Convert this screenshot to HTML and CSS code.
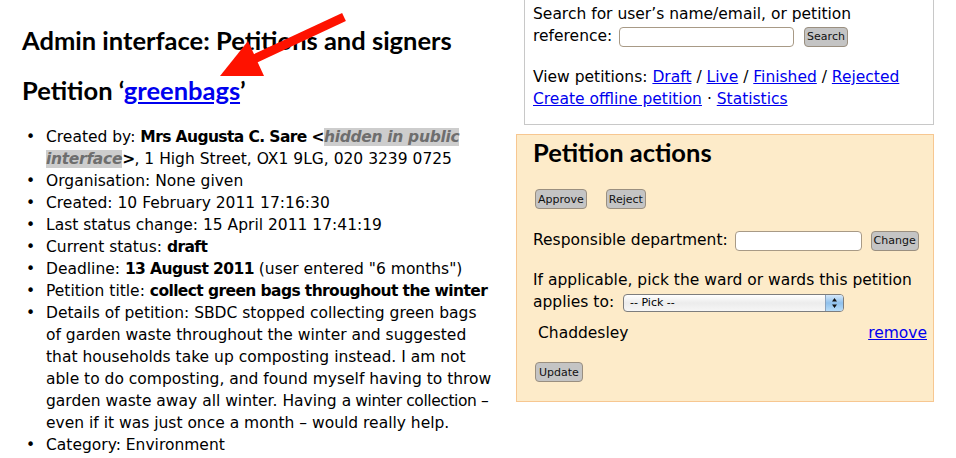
FILE: index.html
```html
<!DOCTYPE html>
<html lang="en">
<head>
<meta charset="utf-8">
<title>Admin interface: Petitions and signers</title>
<link rel="stylesheet" href="styles.css">
</head>
<body>
<div class="page">
  <main class="main">
    <h1 class="title">Admin interface: Petitions and signers</h1>
    <h2 class="subtitle">Petition ‘<a href="#">greenbags</a>’</h2>
    <ul class="details">
      <li>Created by: <b>Mrs Augusta C. Sare &lt;<span class="hidden">hidden in public interface</span>&gt;</b>, 1 High Street, OX1 9LG, 020 3239 0725</li>
      <li>Organisation: None given</li>
      <li>Created: 10 February 2011 17:16:30</li>
      <li>Last status change: 15 April 2011 17:41:19</li>
      <li>Current status: <b>draft</b></li>
      <li>Deadline: <b>13 August 2011</b> (user entered "6 months")</li>
      <li>Petition title: <b>collect green bags throughout the winter</b></li>
      <li>Details of petition: SBDC stopped collecting green bags of garden waste throughout the winter and suggested that households take up composting instead. I am not able to do composting, and found myself having to throw garden waste away all winter. Having <span class="tight">a winter collection&nbsp;–</span> even if it was just once a month – would really help.</li>
      <li>Category: Environment</li>
    </ul>
  </main>
  <aside class="side">
    <div class="search-box">
      <form class="search-form">Search for user’s name/email, or petition reference: <input class="field field-search" type="text"> <button class="btn btn-search" type="button">Search</button></form>
      <p class="views">View petitions: <a href="#">Draft</a> / <a href="#">Live</a> / <a href="#">Finished</a> / <a href="#">Rejected</a><br><a href="#">Create offline petition</a> · <a href="#">Statistics</a></p>
    </div>
    <div class="actions">
      <h2 class="actions-title">Petition actions</h2>
      <div class="btn-row"><button class="btn" type="button">Approve</button><button class="btn" type="button">Reject</button></div>
      <p class="dept">Responsible department: <input class="field field-dept" type="text"> <button class="btn btn-change" type="button">Change</button></p>
      <p class="ward-pick">If applicable, pick the ward or wards this petition applies to: <span class="select"><select class="select-native"><option>-- Pick --</option></select><span class="select-btn"><svg width="7" height="12" viewBox="0 0 7 12"><path d="M3.5 1 L6 4.5 H1 Z M3.5 11 L6 7.5 H1 Z" fill="#111"/></svg></span></span></p>
      <div class="ward"><span>Chaddesley</span><a href="#">remove</a></div>
      <div class="update-row"><button class="btn" type="button">Update</button></div>
    </div>
  </aside>
  <svg class="arrow" width="400" height="100" viewBox="0 0 400 100">
    <line x1="344" y1="17" x2="252" y2="60" stroke="#fe1200" stroke-width="9"/>
    <polygon points="220,76 248,41 264,76" fill="#fe1200"/>
  </svg>
</div>
</body>
</html>
```
FILE: styles.css
```css
body {
  margin: 0;
  background: #fff;
  color: #000;
  font-family: "DejaVu Sans", sans-serif;
  font-size: 15.5px;
  line-height: 22px;
}

a { color: #0000ee; }

.page {
  position: relative;
  display: flex;
  gap: 22px;
  padding: 0 22px;
}

.main {
  flex: 1;
  min-width: 0;
}

.title,
.subtitle,
.actions-title {
  font-family: "Lato", sans-serif;
  font-weight: bold;
  font-size: 25.5px;
  line-height: 28px;
  margin: 0;
}

.title { margin-top: 26px; }
.subtitle { margin-top: 22px; }

.details {
  margin: 22px 0 0;
  padding-left: 24px;
  list-style: none;
}

.details li::before {
  content: "•";
  display: inline-block;
  width: 20px;
  margin-left: -20px;
}

.details b { letter-spacing: -0.6px; }

.tight { letter-spacing: -0.4px; }

.hidden {
  font-style: italic;
  color: #6e6e6e;
  background: #cdcdcd;
  letter-spacing: -0.3px;
}

.side {
  flex: none;
  width: 418px;
}

.search-box {
  margin-left: 8px;
  border: 1px solid #c8c8c8;
  border-top: 0;
  padding: 3px 8px 14px;
}

.search-form { margin: 0; }

.views { margin: 19px 0 0; }

.field {
  box-sizing: border-box;
  height: 20px;
  border: 1px solid #a89a86;
  border-radius: 4px;
  background: #fff;
  vertical-align: middle;
  padding: 0 3px;
}

.field-search { width: 175px; margin-left: 2px; }
.field-dept { width: 127px; margin-left: 2px; }

.btn {
  box-sizing: border-box;
  height: 20px;
  padding: 0 3px;
  margin: 0 2px;
  font-family: "DejaVu Sans", sans-serif;
  font-size: 11px;
  color: #111;
  background: #c4c4c4;
  border: 1px solid #9a8f80;
  border-radius: 4px;
  vertical-align: middle;
}

.btn-search { margin-left: 5px; padding: 0 2px; }
.btn-change { margin-left: 4px; padding: 0 2px; }

.actions {
  margin-top: 9px;
  background: #fdebc9;
  border: 1px solid #f7c791;
  padding: 3px 8px 18px 16px;
}

.btn-row {
  margin-top: 22px;
  display: flex;
  gap: 15px;
  height: 22px;
  align-items: center;
}

.btn-row .btn { padding: 0 2px; }

.dept { margin: 19px 0 0; white-space: nowrap; }
.ward-pick { margin: 18px 0 0; }

.select {
  display: inline-flex;
  box-sizing: border-box;
  width: 221px;
  height: 18px;
  margin-left: 4px;
  border: 1px solid #7d7d7d;
  border-radius: 4px;
  overflow: hidden;
  vertical-align: middle;
  background: linear-gradient(#ffffff, #ececec 50%, #f6f6f6);
}

.select-native {
  flex: 1;
  appearance: none;
  -webkit-appearance: none;
  border: 0;
  background: transparent;
  font-family: "DejaVu Sans", sans-serif;
  font-size: 11px;
  padding: 0 0 0 6px;
  color: #000;
  height: 16px;
  line-height: 16px;
}

.select-btn {
  width: 17px;
  display: flex;
  align-items: center;
  justify-content: center;
  background: linear-gradient(#d5e8fa, #8fc0ec 50%, #b8dcf8);
  border-left: 1px solid #8aa2bd;
}

.ward {
  display: flex;
  justify-content: space-between;
  margin: 9px -2px 0 5px;
}

.update-row {
  margin-top: 17px;
  height: 22px;
  display: flex;
  align-items: center;
}

.arrow {
  position: absolute;
  left: 0;
  top: 0;
  pointer-events: none;
}
```
